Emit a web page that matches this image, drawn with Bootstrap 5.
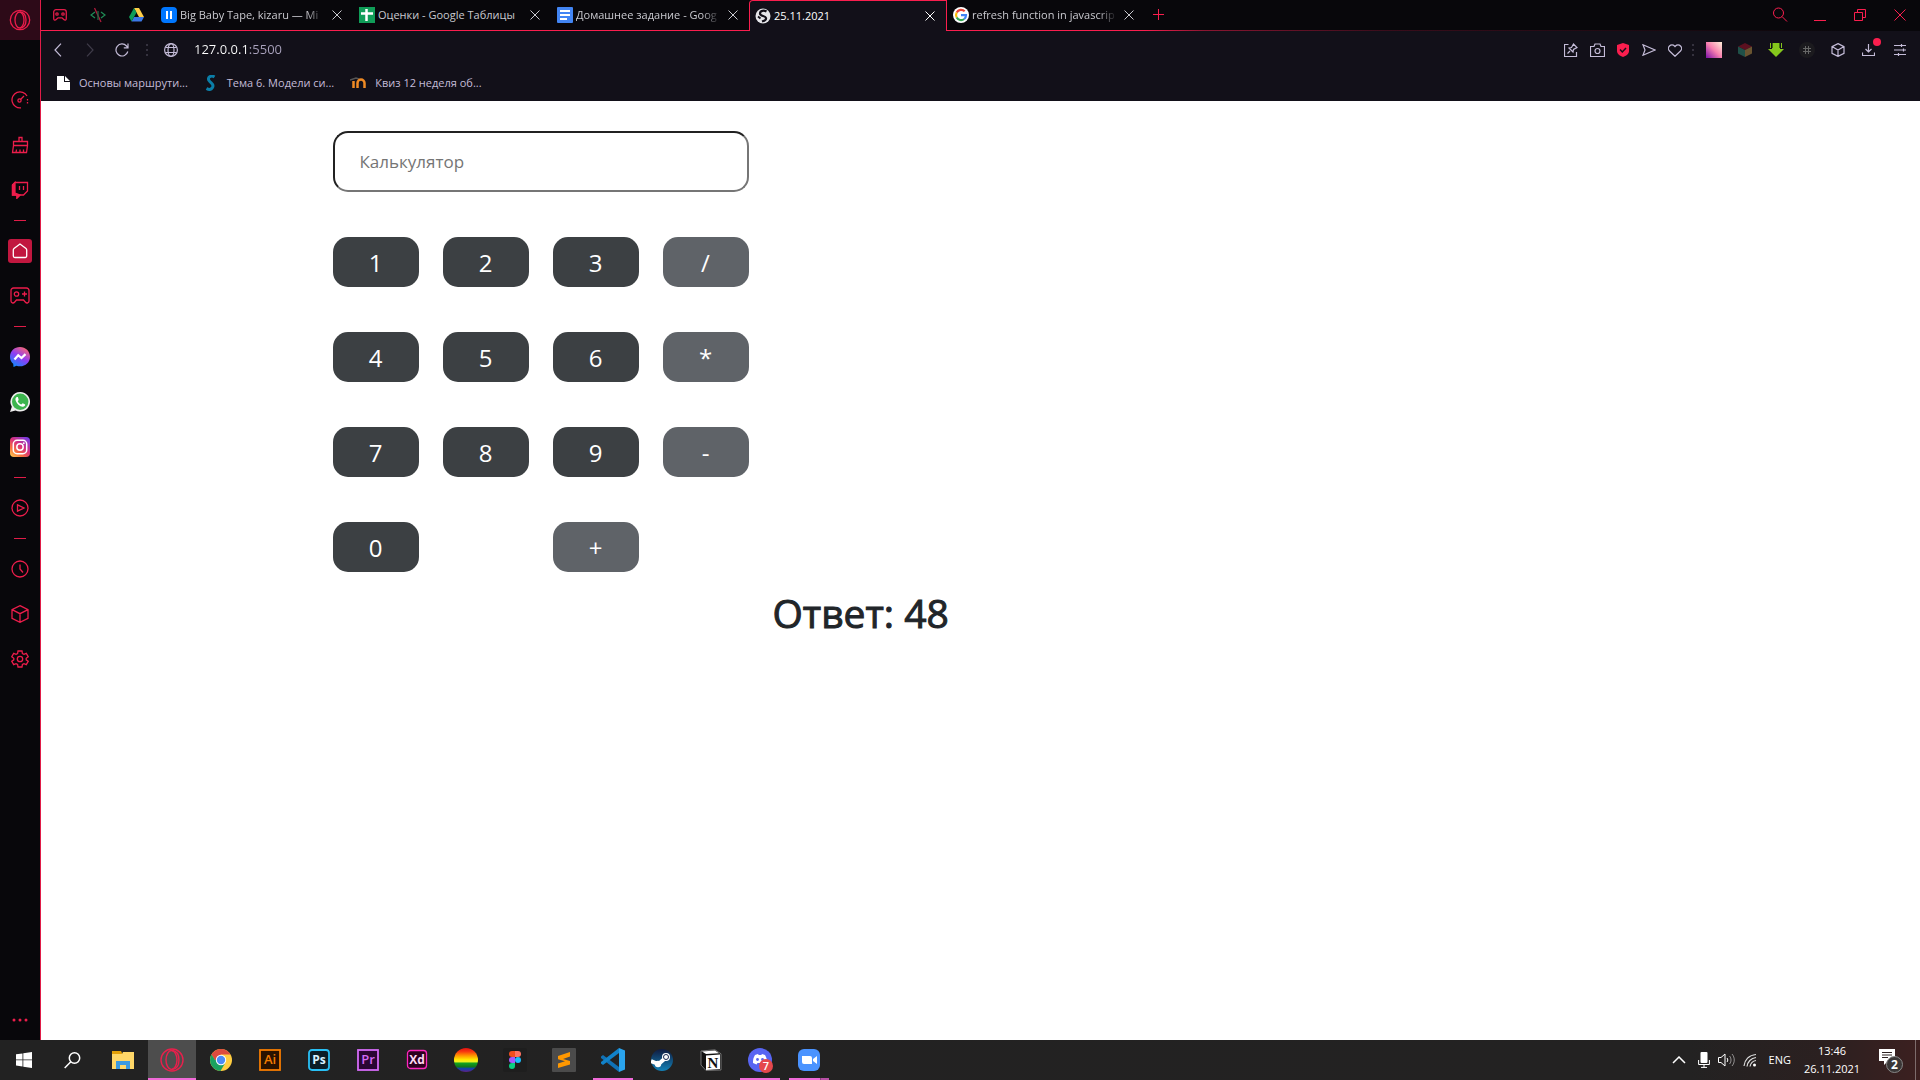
<!DOCTYPE html>
<html lang="ru">
<head>
<meta charset="utf-8">
<meta name="viewport" content="width=device-width, initial-scale=1">
<title>25.11.2021</title>
<link href="https://cdn.jsdelivr.net/npm/bootstrap@5.3.0/dist/css/bootstrap.min.css" rel="stylesheet">
<style>
  :root { --gx: #fa1e4e; --chrome: #121019; --night: #08070b; --soft: #c4bcd8; }
  body { font-family: "Open Sans", "Noto Sans", sans-serif; }
  button { border: 0; background: none; padding: 0; color: inherit; }
  svg { display: block; flex: none; }
  .ln { fill: none; stroke: currentColor; stroke-width: 1; }
  .shell, .view { min-height: 0; min-width: 0; }

  /* Side panel */
  .side { width: 41px; background: var(--night); color: #ec1d4b; border-right: 1px solid #e01c48; }
  .side .ln { stroke-width: 1.3; }
  .side-logo { height: 40px; background: #2d0a18; margin-bottom: 37px; }
  .side-item { height: 45px; }
  .side-sep { height: 16px; }
  .side-sep::after { content: ""; width: 12px; height: 1px; background: #e01c48; }
  .side-home { width: 24px; height: 24px; background: #c1173f; border-radius: 3px; color: #fff; }
  .side-more { height: 40px; }

  /* Tab strip */
  .tabstrip { height: 31px; background: var(--night); color: #c9c9cf; font-size: 11px; }
  .tab-pin { width: 38px; border-bottom: 1px solid var(--gx); }
  .tab-item { flex: 0 1 198px; min-width: 0; padding: 0 7px 0 6px; gap: 3px; border-bottom: 1px solid var(--gx); }
  .tab-item a { flex: 1; min-width: 0; overflow: hidden; white-space: nowrap; color: inherit; text-decoration: none; }
  .tab-fade { -webkit-mask-image: linear-gradient(90deg, #000 87%, transparent 100%); mask-image: linear-gradient(90deg, #000 87%, transparent 100%); }
  .tab-now { padding-left: 5px; background: var(--chrome); color: #fff; border: 1px solid var(--gx); border-bottom: 0; border-radius: 4px 0 0 0; }
  .tab-end { border-image: linear-gradient(90deg, var(--gx), #8a1631 60px, #3a0d1b 240px, transparent 700px) 1; border-style: solid; border-width: 0 0 1px; color: var(--gx); }
  .tab-close { width: 18px; height: 18px; }
  .win-btn { width: 40px; }

  /* Address bar and bookmarks */
  .addr { height: 39px; background: var(--chrome); color: var(--soft); padding: 0 5px 1px 1px; }
  .addr .ln { stroke-width: 1.2; }
  .nav-btn { width: 32px; height: 32px; }
  .dots { width: 2px; height: 12px; background: repeating-linear-gradient(#35323f 0 2px, transparent 2px 5px); }
  .url { border: 0; outline: 0; font-size: 13px; color: transparent; padding: 0;
    background: linear-gradient(90deg, #fff 54px, #aaa3bd 54px); -webkit-background-clip: text; background-clip: text; }
  .tool { width: 26px; height: 26px; }
  .ext { width: 31px; height: 26px; }
  .dl-dot { position: absolute; width: 8px; height: 8px; border-radius: 50%; background: var(--gx); top: 1px; right: 3px; }
  .marks { height: 31px; background: var(--chrome); font-size: 11px; padding: 0 0 5px 16px; gap: 16px; }
  .marks a { color: var(--soft); text-decoration: none; gap: 9px; }

  /* Calculator */
  .calc-field { height: 61px; padding: 0 25px; border: 2px inset #767676; border-radius: 15px; font-size: 17px; color: #212529; background: #fff; }
  .calc-field::placeholder { color: #757575; opacity: 1; }
  .calc-page { padding-top: 30px; }
  .calc-keys { margin-top: 45px; row-gap: 45px; }
  .calc-key { height: 50px; padding-top: 2px; border-radius: 15px; background: #3c4043; color: #fff; font-size: 24px; }
  .calc-op { background: #5f6368; }
  .calc-answer { font-size: 39px; line-height: 50px; color: #212529; -webkit-text-stroke: 1px #212529; }

  /* Taskbar */
  .taskbar { height: 40px; background: linear-gradient(90deg, #222 0, #232222 88%, #2b2020 95%, #3c2020 100%); color: #fff; font-size: 11px; }
  .task { width: 48px; height: 40px; position: relative; margin-right: 1px; }
  .task-start { margin-right: 0; }
  .task-find { margin-right: 3px; }
  .task-run::after { content: ""; position: absolute; left: 4px; right: 4px; bottom: 0; height: 2px; background: #f06ad8; }
  .task-now { background: #4d4d4d; }
  .task-now::after { left: 0; right: 0; }
  .task-stack::after { background: linear-gradient(90deg, #f06ad8 31px, #8a3f7c 31px 32px, #b850a6 32px); }
  .tray { gap: 8px; }
  .clock { width: 66px; line-height: 18px; }
  .notif { width: 50px; }
  .desk-edge { width: 5px; border-left: 1px solid #7d6c6c; }
</style>
<script src="https://cdn.jsdelivr.net/npm/bootstrap@5.3.0/dist/js/bootstrap.bundle.min.js"></script>
</head>
<body class="vh-100 d-flex flex-column overflow-hidden bg-white">

<div class="shell d-flex flex-grow-1">
  <nav class="side d-flex flex-column flex-shrink-0" aria-label="Боковая панель">
    <button class="side-logo d-flex align-items-center justify-content-center" aria-label="Opera GX">
      <svg class="ln" width="22" height="22" viewBox="0 0 22 22"><circle cx="11" cy="11" r="9.700"/><ellipse cx="10.500" cy="11" rx="4.500" ry="8"/><path d="M11 2.800c4 .4 6 4 6 8.200s-2 7.800-6 8.200"/></svg>
    </button>
    <button class="side-item d-flex align-items-center justify-content-center" aria-label="GX Control">
      <svg class="ln" width="18" height="18" viewBox="0 0 18 18"><path d="M10 16.800A8 8 0 1 1 16 5"/><path d="M16.500 8v6" stroke-dasharray="1.500 1.500"/><circle cx="8.500" cy="9.500" r="1.600"/><path d="M9.500 8.500L13 5"/></svg>
    </button>
    <button class="side-item d-flex align-items-center justify-content-center" aria-label="GX Cleaner">
      <svg class="ln" width="18" height="18" viewBox="0 0 18 18"><path d="M8 5.500v-4h3v4M2.500 5.500h14v4h-14zM2.500 9.500l-1 7h14l1-7M5 16.500l.500-3M9 16.500v-3M12.500 16.500v-3"/></svg>
    </button>
    <button class="side-item d-flex align-items-center justify-content-center" aria-label="Twitch">
      <svg class="ln" width="18" height="18" viewBox="0 0 18 18"><path d="M4 1.500h12.500v8.500l-4 4H9l-3 3v-3H1.500V4z"/><path fill="currentColor" d="M4 1.500L1.500 4v10H6v3l3-3-5-2z"/><path d="M8.500 5v4M12.500 5v4"/></svg>
    </button>
    <div class="side-sep d-flex align-items-center justify-content-center"></div>
    <button class="side-item d-flex align-items-center justify-content-center" aria-label="Главная">
      <span class="side-home d-flex align-items-center justify-content-center"><svg class="ln" width="16" height="16" viewBox="0 0 16 16"><path d="M8 1L2 5.500a2 2 0 0 0-.700 1.500v6a1.500 1.500 0 0 0 1.500 1.500h10.400a1.500 1.500 0 0 0 1.500-1.500V7a2 2 0 0 0-.700-1.500z"/></svg></span>
    </button>
    <button class="side-item d-flex align-items-center justify-content-center" aria-label="Игры">
      <svg class="ln" width="20" height="17" viewBox="0 0 20 17"><path d="M3.500 1h13a2.500 2.500 0 0 1 2.500 2.500V14a2 2 0 0 1-3.500 1.300l-2-2.300h-7l-2 2.300A2 2 0 0 1 1 14V3.500A2.500 2.500 0 0 1 3.500 1z"/><circle cx="6.500" cy="7" r="2.200"/><path d="M14.500 4.500v5M12 7h5"/></svg>
    </button>
    <div class="side-sep d-flex align-items-center justify-content-center"></div>
    <button class="side-item d-flex align-items-center justify-content-center" aria-label="Messenger">
      <svg width="20" height="20" viewBox="0 0 20 20"><defs><linearGradient id="ms" x1=".2" y1="1" x2=".8" y2="0"><stop stop-color="#0a8cff"/><stop offset=".5" stop-color="#8d3df5"/><stop offset="1" stop-color="#ff6a6c"/></linearGradient></defs><path fill="url(#ms)" d="M10 0C4.300 0 0 4.200 0 9.700c0 3 1.200 5.400 3.200 7.100L3.500 20l3-1.300c1 .4 2.200.600 3.500.600 5.700 0 10-4.200 10-9.600S15.700 0 10 0z"/><path d="M4.500 12.500l3.700-4.300 3.300 2.900 4-4" fill="none" stroke="#fff" stroke-width="2.200"/></svg>
    </button>
    <button class="side-item d-flex align-items-center justify-content-center" aria-label="WhatsApp">
      <svg width="20" height="20" viewBox="0 0 20 20"><path fill="#eee" d="M10.200 0A9.800 9.800 0 0 0 1.800 14.800L0 20l5.500-1.600A9.800 9.800 0 1 0 10.200 0z"/><circle cx="10.200" cy="9.800" r="8.200" fill="#3cb54e"/><path fill="#fff" d="M7 5c-1.500.500-2 2-1.200 4 1.400 3.200 4 5.300 6.700 5.800 1.500.2 2.700-.800 2.700-2.200l-2.500-1.400-1.400 1.300C9.600 11.900 8.300 10.700 7.700 9.200l1-1.300L7.900 5z"/></svg>
    </button>
    <button class="side-item d-flex align-items-center justify-content-center" aria-label="Instagram">
      <svg width="20" height="20" viewBox="0 0 20 20"><defs><linearGradient id="ig" x1="0" y1="1" x2=".8" y2="0"><stop stop-color="#ffd75a"/><stop offset=".3" stop-color="#f9733c"/><stop offset=".6" stop-color="#d8307c"/><stop offset="1" stop-color="#7a3be0"/></linearGradient></defs><rect width="20" height="20" rx="4" fill="url(#ig)"/><g fill="none" stroke="#fff" stroke-width="1.500"><rect x="3.300" y="3.300" width="13.400" height="13.400" rx="3.800"/><circle cx="10" cy="10" r="3.200"/></g><circle cx="13.800" cy="6.200" r=".900" fill="#fff"/></svg>
    </button>
    <div class="side-sep d-flex align-items-center justify-content-center"></div>
    <button class="side-item d-flex align-items-center justify-content-center" aria-label="Плеер">
      <svg class="ln" width="18" height="18" viewBox="0 0 18 18"><circle cx="9" cy="9" r="8"/><path d="M6.500 5.800v6.400L13 9z"/></svg>
    </button>
    <div class="side-sep d-flex align-items-center justify-content-center"></div>
    <button class="side-item d-flex align-items-center justify-content-center" aria-label="История">
      <svg class="ln" width="18" height="18" viewBox="0 0 18 18"><circle cx="9" cy="9" r="8"/><path d="M9 4.500V9l3 3.500"/></svg>
    </button>
    <button class="side-item d-flex align-items-center justify-content-center" aria-label="Расширения">
      <svg class="ln" width="18" height="18" viewBox="0 0 18 18"><path d="M9 .700l8 4v8.600l-8 4-8-4V4.700zM1 4.700l8 4 8-4M9 8.700v8.600"/></svg>
    </button>
    <button class="side-item d-flex align-items-center justify-content-center" aria-label="Настройки">
      <svg class="ln" width="18" height="18" viewBox="0 0 18 18"><circle cx="9" cy="9" r="2.700"/><path d="M7 1h4l.400 2.500 1.600.900 2.300-1 1.900 3.300-2 1.500v1.600l2 1.500-1.900 3.300-2.300-1-1.600.900L11 17H7l-.400-2.500-1.600-.900-2.300 1L.800 11.300l2-1.500V8.200l-2-1.500 1.900-3.300 2.300 1 1.600-.900z"/></svg>
    </button>
    <button class="side-more d-flex align-items-center justify-content-center mt-auto" aria-label="Ещё">
      <svg width="16" height="4" viewBox="0 0 16 4" fill="currentColor"><circle cx="2" cy="2" r="1.500"/><circle cx="8" cy="2" r="1.500"/><circle cx="14" cy="2" r="1.500"/></svg>
    </button>
  </nav>

  <div class="view d-flex flex-column flex-grow-1">
    <div class="tabstrip d-flex">
      <button class="tab-pin d-flex align-items-center justify-content-center" aria-label="GX Corner">
        <svg width="16" height="12" viewBox="0 0 16 12" fill="none" stroke="#e01c48" stroke-width="1.300"><path d="M4 .700h8A2.300 2.300 0 0 1 14.300 3v6.500c0 1.800-1.500 2-2.500 1L10 8.800H6l-1.800 1.700c-1 1-2.500.8-2.500-1V3A2.300 2.300 0 0 1 4 .700z"/><circle cx="5" cy="5" r="1.200"/><circle cx="11" cy="5" r="1.200"/></svg>
      </button>
      <button class="tab-pin d-flex align-items-center justify-content-center" aria-label="Код">
        <svg width="16" height="16" viewBox="0 0 16 16" fill="none" stroke-width="1.300"><path d="M5 5L1 8l4 3M11 5l4 3-4 3" stroke="#1f8a55"/><path d="M4.500 1l6.500 14" stroke="#b01c3c"/><path d="M8 4v9" stroke="#1f6a45"/></svg>
      </button>
      <button class="tab-pin d-flex align-items-center justify-content-center" aria-label="Google Drive">
        <svg width="15" height="14" viewBox="0 0 15 14"><path fill="#ffcf48" d="M5 0h5l5 9h-5z"/><path fill="#3b78e7" d="M0 9l2.500 4.500h10L15 9H5l-2.500 4.500z"/><path fill="#0f9d58" d="M5 0l2.500 4.500L2.500 13.500 0 9z"/></svg>
      </button>
      <div class="tab-item d-flex align-items-center">
        <svg width="16" height="16" viewBox="0 0 16 16"><rect width="16" height="16" rx="4" fill="#07f"/><path d="M6 4v8M10 4v8" stroke="#fff" stroke-width="2"/></svg>
        <a class="tab-fade" href="#">Big Baby Tape, kizaru — Mi</a>
        <button class="tab-close d-flex align-items-center justify-content-center" aria-label="Закрыть"><svg class="ln" width="10" height="10" viewBox="0 0 10 10"><path d="M.5.5l9 9M9.500.5l-9 9"/></svg></button>
      </div>
      <div class="tab-item d-flex align-items-center">
        <svg width="16" height="16" viewBox="0 0 16 16"><rect width="16" height="16" fill="#109d58"/><path d="M7.500 2v12M2 6.500h12" stroke="#fff" stroke-width="2.500"/></svg>
        <a href="#">Оценки - Google Таблицы</a>
        <button class="tab-close d-flex align-items-center justify-content-center" aria-label="Закрыть"><svg class="ln" width="10" height="10" viewBox="0 0 10 10"><path d="M.5.5l9 9M9.500.5l-9 9"/></svg></button>
      </div>
      <div class="tab-item d-flex align-items-center">
        <svg width="16" height="16" viewBox="0 0 16 16"><rect width="16" height="16" rx="1" fill="#4285f4"/><path d="M3 4h10M3 8h10M3 12h7" stroke="#fff" stroke-width="2"/></svg>
        <a class="tab-fade" href="#">Домашнее задание - Goog</a>
        <button class="tab-close d-flex align-items-center justify-content-center" aria-label="Закрыть"><svg class="ln" width="10" height="10" viewBox="0 0 10 10"><path d="M.5.5l9 9M9.500.5l-9 9"/></svg></button>
      </div>
      <div class="tab-item tab-now d-flex align-items-center">
        <svg width="16" height="16" viewBox="0 0 16 16"><circle cx="8" cy="8" r="7.500" fill="#e6e6ea"/><path d="M11.500 3.500C9 2 5 2.500 5 5.500s5.500 2 6 4.500-2.500 3-4 3.500" fill="none" stroke="#121019" stroke-width="2.200"/><path d="M3 8.500l2.500 2" stroke="#121019" stroke-width="1.800"/></svg>
        <a href="#">25.11.2021</a>
        <button class="tab-close d-flex align-items-center justify-content-center" aria-label="Закрыть"><svg class="ln" width="10" height="10" viewBox="0 0 10 10"><path d="M.5.5l9 9M9.500.5l-9 9"/></svg></button>
      </div>
      <div class="tab-item d-flex align-items-center">
        <svg width="16" height="16" viewBox="0 0 16 16"><circle cx="8" cy="8" r="8" fill="#fff"/><g fill="none" stroke-width="2.200"><path d="M11.700 4.300A5 5 0 0 0 3.700 5.500" stroke="#ea4335"/><path d="M3.700 5.500a5 5 0 0 0 0 5" stroke="#fbbc05"/><path d="M3.700 10.500a5 5 0 0 0 7.500 1.500" stroke="#34a853"/><path d="M11.200 12A5 5 0 0 0 13 8.200H8" stroke="#4285f4"/></g></svg>
        <a class="tab-fade" href="#">refresh function in javascrip</a>
        <button class="tab-close d-flex align-items-center justify-content-center" aria-label="Закрыть"><svg class="ln" width="10" height="10" viewBox="0 0 10 10"><path d="M.5.5l9 9M9.500.5l-9 9"/></svg></button>
      </div>
      <div class="tab-end d-flex flex-grow-1">
        <button class="px-2" aria-label="Новая вкладка"><svg class="ln" width="12" height="12" viewBox="0 0 12 12"><path d="M5.500 0v11M0 5.500h11"/></svg></button>
        <button class="win-btn ms-auto d-flex align-items-center justify-content-center" aria-label="Поиск вкладок"><svg class="ln" width="16" height="16" viewBox="0 0 16 16"><circle cx="6.500" cy="6" r="5"/><path d="M10 9.500l5 5"/></svg></button>
        <button class="win-btn d-flex align-items-center justify-content-center" aria-label="Свернуть"><svg class="ln" width="12" height="12" viewBox="0 0 12 12"><path d="M0 11.500h12"/></svg></button>
        <button class="win-btn d-flex align-items-center justify-content-center" aria-label="Развернуть"><svg class="ln" width="12" height="12" viewBox="0 0 12 12"><path d="M.5 3.500h8v8h-8zM3.500 3V.5h8v8H9"/></svg></button>
        <button class="win-btn d-flex align-items-center justify-content-center" aria-label="Закрыть окно"><svg class="ln" width="12" height="12" viewBox="0 0 12 12"><path d="M.5.5l11 11M11.500.5l-11 11"/></svg></button>
      </div>
    </div>

    <div class="addr d-flex align-items-center">
      <button class="nav-btn d-flex align-items-center justify-content-center" aria-label="Назад"><svg class="ln" width="8" height="14" viewBox="0 0 8 14"><path d="M7 .700L1 7l6 6.300"/></svg></button>
      <button class="nav-btn d-flex align-items-center justify-content-center opacity-25" aria-label="Вперёд"><svg class="ln" width="8" height="14" viewBox="0 0 8 14"><path d="M1 .700L7 7l-6 6.300"/></svg></button>
      <button class="nav-btn d-flex align-items-center justify-content-center" aria-label="Обновить"><svg class="ln" width="14" height="14" viewBox="0 0 14 14"><path d="M12.800 8.500A6 6 0 1 1 11.500 3l1.500 1.700M13 .500v4.300H8.800"/></svg></button>
      <span class="dots ms-2"></span>
      <svg class="ln ms-3" width="14" height="14" viewBox="0 0 14 14"><circle cx="7" cy="7" r="6.400"/><ellipse cx="7" cy="7" rx="3" ry="6.400"/><path d="M1.500 4.500h11M1.500 9.500h11"/></svg>
      <input class="url flex-grow-1 ms-3" type="text" aria-label="Адрес" value="127.0.0.1:5500">
      <button class="tool d-flex align-items-center justify-content-center" aria-label="Закрепить"><svg class="ln" width="14" height="14" viewBox="0 0 14 14"><path d="M4.500 1.500h-4v12h12V9M3.500 10.500L6 8M5 5l4 4 .5-2.500L13 4.500 9.500 1 7.500 4.500z"/></svg></button>
      <button class="tool d-flex align-items-center justify-content-center" aria-label="Снимок"><svg class="ln" width="15" height="14" viewBox="0 0 15 14"><path d="M.5 3.500H4L5 1h5l1 2.500h3.500v10H.5z"/><circle cx="7.500" cy="8" r="2.500"/></svg></button>
      <button class="tool d-flex align-items-center justify-content-center" aria-label="Блокировка рекламы"><svg width="12" height="14" viewBox="0 0 12 14"><path fill="#fa1e4e" d="M6 0l6 2v6c0 3-3 5-6 6-3-1-6-3-6-6V2z"/><path d="M3 6.500l2.300 2.500L9 5" fill="none" stroke="#121019" stroke-width="1.500"/></svg></button>
      <button class="tool d-flex align-items-center justify-content-center" aria-label="My Flow"><svg class="ln" width="14" height="12" viewBox="0 0 14 12"><path d="M1 .800L13 6 1 11.200 3 6z"/></svg></button>
      <button class="tool d-flex align-items-center justify-content-center" aria-label="В закладки"><svg class="ln" width="14" height="13" viewBox="0 0 14 13"><path d="M7 12.300L1.500 7A3.500 3.500 0 0 1 6.500 2l.5.600.5-.600a3.500 3.500 0 0 1 5 5z"/></svg></button>
      <span class="dots mx-1"></span>
      <button class="ext d-flex align-items-center justify-content-center" aria-label="Расширение: градиент"><svg width="16" height="16" viewBox="0 0 16 16"><defs><linearGradient id="gr" x1="0" y1="1" x2="1" y2="0"><stop stop-color="#7b10a8"/><stop offset=".5" stop-color="#f77fae"/><stop offset="1" stop-color="#fff0d8"/></linearGradient></defs><rect width="16" height="16" fill="url(#gr)"/></svg></button>
      <button class="ext d-flex align-items-center justify-content-center" aria-label="Расширение: куб"><svg width="14" height="14" viewBox="0 0 14 14"><path fill="#5c1020" d="M7 0l7 3.500L7 7 0 3.500z"/><path fill="#1f5048" d="M0 3.500L7 7v7l-7-3.500z"/><path fill="#6a5430" d="M14 3.500L7 7v7l7-3.500z"/></svg></button>
      <button class="ext d-flex align-items-center justify-content-center" aria-label="Расширение: загрузка"><svg width="16" height="16" viewBox="0 0 16 16"><path fill="#85c81c" d="M4 1h8v6h4l-8 8-8-8h4z"/><path fill="#85c81c" d="M2 1h1v5H2zM13 1h1v5h-1z"/><path d="M4.500 1v5M11.500 1v5" stroke="#3d6a0d"/></svg></button>
      <button class="ext d-flex align-items-center justify-content-center" aria-label="Расширение: решётка"><svg width="16" height="16" viewBox="0 0 16 16"><circle cx="8" cy="8" r="8" fill="#1b1a1e"/><path d="M6.500 4v8M9.500 4v8M4 6.500h8M4 9.500h8" stroke="#666"/></svg></button>
      <button class="ext d-flex align-items-center justify-content-center" aria-label="Расширения"><svg class="ln" width="14" height="14" viewBox="0 0 14 14"><path d="M7 .600l6 3v6.800l-6 3-6-3V3.600zM1 3.600l6 3.400 6-3.400M7 7v6.400"/></svg></button>
      <button class="ext position-relative d-flex align-items-center justify-content-center" aria-label="Загрузки"><svg class="ln" width="13" height="12" viewBox="0 0 13 12"><path d="M6.500 0v8M3.500 5l3 3 3-3M.5 8.500v3h12v-3"/></svg><span class="dl-dot"></span></button>
      <button class="ext d-flex align-items-center justify-content-center" aria-label="Простая настройка"><svg class="ln" width="12" height="12" viewBox="0 0 12 12"><path d="M0 1.500h12M0 6h12M0 10.500h12M7.500 0v3M9.500 4.500v3M4.500 9v3"/></svg></button>
    </div>

    <div class="marks d-flex align-items-center">
      <a href="#" class="d-flex align-items-center"><svg width="13" height="14" viewBox="0 0 13 14"><path fill="#fff" d="M0 0h7v6h6v8H0zM8 0l5 5H8z"/></svg>Основы маршрути...</a>
      <a href="#" class="d-flex align-items-center"><svg width="14" height="16" viewBox="0 0 14 16"><path d="M10.500 2C7-.3 3 2.500 5 5.500s5.500 3.500 3.500 7-5 1.500-6 1" fill="none" stroke="#0b7ea8" stroke-width="3"/></svg>Тема 6. Модели си...</a>
      <a href="#" class="d-flex align-items-center"><svg width="16" height="12" viewBox="0 0 16 12"><path d="M0 3l6-2 3 1" fill="none" stroke="#555" stroke-width="1.500"/><path d="M3.500 11V4M7.500 11V6a2 2 0 0 1 7 0v5" fill="none" stroke="#f08a24" stroke-width="2.500"/></svg>Квиз 12 неделя об...</a>
    </div>

    <main class="flex-grow-1 overflow-auto calc-page">
      <div class="container">
        <div class="row">
          <div class="col-4">
            <input class="calc-field w-100 d-block" type="text" placeholder="Калькулятор" aria-label="Калькулятор">
            <div class="row calc-keys">
              <div class="col-3"><button class="calc-key w-100">1</button></div>
              <div class="col-3"><button class="calc-key w-100">2</button></div>
              <div class="col-3"><button class="calc-key w-100">3</button></div>
              <div class="col-3"><button class="calc-key calc-op w-100">/</button></div>
              <div class="col-3"><button class="calc-key w-100">4</button></div>
              <div class="col-3"><button class="calc-key w-100">5</button></div>
              <div class="col-3"><button class="calc-key w-100">6</button></div>
              <div class="col-3"><button class="calc-key calc-op w-100">*</button></div>
              <div class="col-3"><button class="calc-key w-100">7</button></div>
              <div class="col-3"><button class="calc-key w-100">8</button></div>
              <div class="col-3"><button class="calc-key w-100">9</button></div>
              <div class="col-3"><button class="calc-key calc-op w-100">-</button></div>
              <div class="col-3"><button class="calc-key w-100">0</button></div>
              <div class="col-3 offset-3"><button class="calc-key calc-op w-100">+</button></div>
            </div>
          </div>
        </div>
        <div class="row mt-3">
          <div class="col-4 offset-4"><h1 class="calc-answer fw-normal mb-0">Ответ: 48</h1></div>
        </div>
      </div>
    </main>
  </div>
</div>

<footer class="taskbar d-flex flex-shrink-0">
  <button class="task task-start d-flex align-items-center justify-content-center" aria-label="Пуск"><svg width="16" height="16" viewBox="0 0 16 16" fill="#fff"><path d="M0 2.300L6.500 1.400v6.100H0zM7.300 1.300L16 0v7.500H7.300zM0 8.300h6.500v6.200L0 13.600zM7.300 8.300H16V16l-8.700-1.300z"/></svg></button>
  <button class="task task-find d-flex align-items-center justify-content-center" aria-label="Поиск"><svg width="17" height="17" viewBox="0 0 17 17" fill="none" stroke="#fff" stroke-width="1.500"><circle cx="10.500" cy="6" r="5.200"/><path d="M6.800 9.700L.700 16"/></svg></button>
  <button class="task d-flex align-items-center justify-content-center" aria-label="Проводник"><svg width="22" height="18" viewBox="0 0 22 18"><path fill="#e3a008" d="M0 0h9l1 2v3H0z"/><path fill="#ffd768" d="M0 3h10l1-2h11v17H0z"/><path fill="#3b9ae0" d="M4 10h14v8h-4v-4H8v4H4z"/></svg></button>
  <button class="task task-run task-now d-flex align-items-center justify-content-center" aria-label="Opera GX"><svg width="24" height="24" viewBox="0 0 24 24" fill="none" stroke="#e8204c" stroke-width="1.400"><circle cx="12" cy="12" r="11"/><ellipse cx="11.500" cy="12" rx="5.500" ry="9.500"/><path d="M12 2.500c5 .5 7 5 7 9.500s-2 9-7 9.500"/></svg></button>
  <button class="task d-flex align-items-center justify-content-center" aria-label="Chrome"><svg width="22" height="22" viewBox="0 0 22 22"><circle cx="11" cy="11" r="11" fill="#ffcd40"/><path fill="#dd4b3e" d="M1.500 5.500A11 11 0 0 1 20.500 5.500H11L6.500 14z"/><path fill="#1aa260" d="M1.500 5.500A11 11 0 0 0 10.500 22l5-8.500L11 11H5z"/><circle cx="11" cy="11" r="5.200" fill="#fff"/><circle cx="11" cy="11" r="4.200" fill="#4c8bf5"/></svg></button>
  <button class="task d-flex align-items-center justify-content-center" aria-label="Illustrator"><svg width="22" height="22" viewBox="0 0 22 22"><rect x="1" y="1" width="20" height="20" fill="#2a1200" stroke="#f57c00" stroke-width="1.800"/><text x="11" y="15" text-anchor="middle" font-size="13" font-weight="600" fill="#f57c00">Ai</text></svg></button>
  <button class="task d-flex align-items-center justify-content-center" aria-label="Photoshop"><svg width="22" height="22" viewBox="0 0 22 22"><rect x="1" y="1" width="20" height="20" rx="3" fill="#0a1e28" stroke="#29c0f5" stroke-width="1.800"/><text x="11" y="15" text-anchor="middle" font-size="12" font-weight="700" fill="#d8f2ff">Ps</text></svg></button>
  <button class="task d-flex align-items-center justify-content-center" aria-label="Premiere"><svg width="22" height="22" viewBox="0 0 22 22"><rect x="1" y="1" width="20" height="20" fill="#2a0634" stroke="#d36af5" stroke-width="1.800"/><text x="11" y="15" text-anchor="middle" font-size="13" font-weight="600" fill="#d36af5">Pr</text></svg></button>
  <button class="task d-flex align-items-center justify-content-center" aria-label="XD"><svg width="22" height="22" viewBox="0 0 22 22"><rect x="1.500" y="1.500" width="19" height="18" rx="3" fill="#2e001e" stroke="#ff26be" stroke-width="1.300"/><text x="11" y="15" text-anchor="middle" font-size="12" font-weight="700" fill="#ffd9f2">Xd</text></svg></button>
  <button class="task d-flex align-items-center justify-content-center" aria-label="Радуга"><svg width="24" height="24" viewBox="0 0 24 24"><defs><linearGradient id="rb" x1="0" y1="0" x2="0" y2="1"><stop stop-color="#e01010"/><stop offset=".15" stop-color="#f83810"/><stop offset=".3" stop-color="#ff8c00"/><stop offset=".48" stop-color="#ffe600"/><stop offset=".56" stop-color="#f5f520"/><stop offset=".64" stop-color="#10a020"/><stop offset=".78" stop-color="#107818"/><stop offset=".86" stop-color="#1040b0"/><stop offset="1" stop-color="#602080"/></linearGradient></defs><circle cx="12" cy="12" r="12" fill="url(#rb)"/></svg></button>
  <button class="task d-flex align-items-center justify-content-center" aria-label="Figma"><svg width="24" height="24" viewBox="0 0 24 24"><rect width="24" height="24" rx="2" fill="#1e1e1e"/><path fill="#f24e1e" d="M12 3H9a3 3 0 0 0 0 6h3z"/><path fill="#ff7262" d="M12 3h3a3 3 0 0 1 0 6h-3z"/><path fill="#a259ff" d="M12 9H9a3 3 0 0 0 0 6h3z"/><circle cx="15" cy="12" r="3" fill="#1abcfe"/><path fill="#0acf83" d="M12 15H9a3 3 0 1 0 3 3z"/></svg></button>
  <button class="task d-flex align-items-center justify-content-center" aria-label="Sublime Text"><svg width="24" height="24" viewBox="0 0 24 24"><rect width="24" height="24" rx="1" fill="#4b4b4b"/><path fill="#ff9800" d="M6 8l12-4v4.500L11 11l7 2v3.500L6 20v-4.500l7-2.200-7-2z"/></svg></button>
  <button class="task task-run d-flex align-items-center justify-content-center" aria-label="VS Code"><svg width="24" height="24" viewBox="0 0 24 24"><path fill="#1071b5" d="M0 8.500l2-1.500L18 19v5L0 10z"/><path fill="#1182c9" d="M0 15.500l2 1.500L18 5V0L0 14z"/><path fill="#2aa4ee" d="M18 0l6 2.500v19L18 24z"/></svg></button>
  <button class="task d-flex align-items-center justify-content-center" aria-label="Steam"><svg width="22" height="22" viewBox="0 0 22 22"><defs><linearGradient id="st" x1="0" y1="0" x2="0" y2="1"><stop stop-color="#101a3e"/><stop offset="1" stop-color="#1382b8"/></linearGradient></defs><circle cx="11" cy="11" r="11" fill="url(#st)"/><path d="M0 12l6 2.500M7 15.500l8-7" stroke="#fff" stroke-width="4"/><circle cx="7" cy="15" r="3.200" fill="#fff"/><circle cx="15" cy="8" r="4" fill="#fff"/><circle cx="15" cy="8" r="2.500" fill="#fff" stroke="#17274f"/></svg></button>
  <button class="task d-flex align-items-center justify-content-center" aria-label="Notion"><svg width="22" height="22" viewBox="0 0 22 22"><path d="M1 2L15 .800l6 4V21L6 21.500 1 16z" fill="#111" stroke="#999" stroke-width=".7"/><path fill="#fff" d="M2 2.500l13-1 4 2.700L6 5z"/><path fill="#fff" d="M6 6.500l14-1V20L6 21z"/><text x="13" y="18.500" text-anchor="middle" font-family="Liberation Serif, serif" font-size="15" font-weight="700" fill="#111">N</text></svg></button>
  <button class="task task-run d-flex align-items-center justify-content-center" aria-label="Discord"><svg width="26" height="26" viewBox="0 0 26 26"><circle cx="13" cy="13" r="12" fill="#5865f2"/><path fill="#fff" d="M8 8l3-1 .700 1h2.600L15 7l3 1c1.500 2.500 2.200 5 2 8l-3.500 1.500-1-1.500h-5l-1 1.500L6 16c-.2-3 .5-5.500 2-8z"/><circle cx="10.500" cy="12.500" r="1.400" fill="#5865f2"/><circle cx="15.500" cy="12.500" r="1.400" fill="#5865f2"/><circle cx="19" cy="19" r="7" fill="#e5484d"/><text x="19" y="23" text-anchor="middle" font-size="11" font-weight="600" fill="#fff">7</text></svg></button>
  <button class="task task-run task-stack d-flex align-items-center justify-content-center" aria-label="Zoom"><svg width="22" height="22" viewBox="0 0 22 22"><rect width="22" height="22" rx="6" fill="#4a93ff"/><path fill="#fff" d="M4 7h8a2 2 0 0 1 2 2v6H6a2 2 0 0 1-2-2zM15 10l4-3v8l-4-3z"/></svg></button>

  <div class="tray d-flex align-items-center ms-auto">
    <button aria-label="Скрытые значки"><svg width="14" height="8" viewBox="0 0 14 8" fill="none" stroke="#fff" stroke-width="1.500"><path d="M1 7l6-6 6 6"/></svg></button>
    <button aria-label="Микрофон" class="ms-1"><svg width="12" height="16" viewBox="0 0 12 16"><rect x="2.500" width="7" height="11" rx="1" fill="#fff"/><path d="M.6 8v4.500h10.800V8M6 12.500v3M3 15.400h6" fill="none" stroke="#fff"/></svg></button>
    <button aria-label="Громкость"><svg class="ln" width="17" height="14" viewBox="0 0 17 14"><path d="M.5 4.500h2.500L7 1v12L3 9.500H.5zM9 5c1 1.200 1 2.800 0 4"/><path d="M11.500 3c2 2.200 2 5.800 0 8M14 1c3 3.500 3 8.500 0 12" opacity=".5"/></svg></button>
    <button aria-label="Сеть"><svg width="14" height="14" viewBox="0 0 14 14" fill="none" stroke="#ddd" stroke-width="1.200"><path d="M1 13C1.500 7 6 2 13 1.500M4 13.500C4.500 9 8 5 13 4.500M7 13.500C7.500 11 9.500 8 13 7.500"/><circle cx="11.500" cy="12" r="1.500" fill="#fff" stroke="none"/></svg></button>
    <button class="ms-1">ENG</button>
    <button class="clock text-center">13:46<br>26.11.2021</button>
  </div>
  <button class="notif d-flex align-items-center justify-content-center" aria-label="Уведомления"><svg width="26" height="26" viewBox="0 0 26 26"><path fill="#fff" d="M2 2h16v12h-7l-4 4v-4H2z"/><path d="M5 5.500h10M5 8h10M5 10.500h6" stroke="#2b2020"/><circle cx="17.500" cy="17.500" r="8" fill="#3a3636" stroke="#888"/><text x="17.500" y="21.500" text-anchor="middle" font-size="12" font-weight="700" fill="#fff">2</text></svg></button>
  <div class="desk-edge"></div>
</footer>
</body>
</html>
